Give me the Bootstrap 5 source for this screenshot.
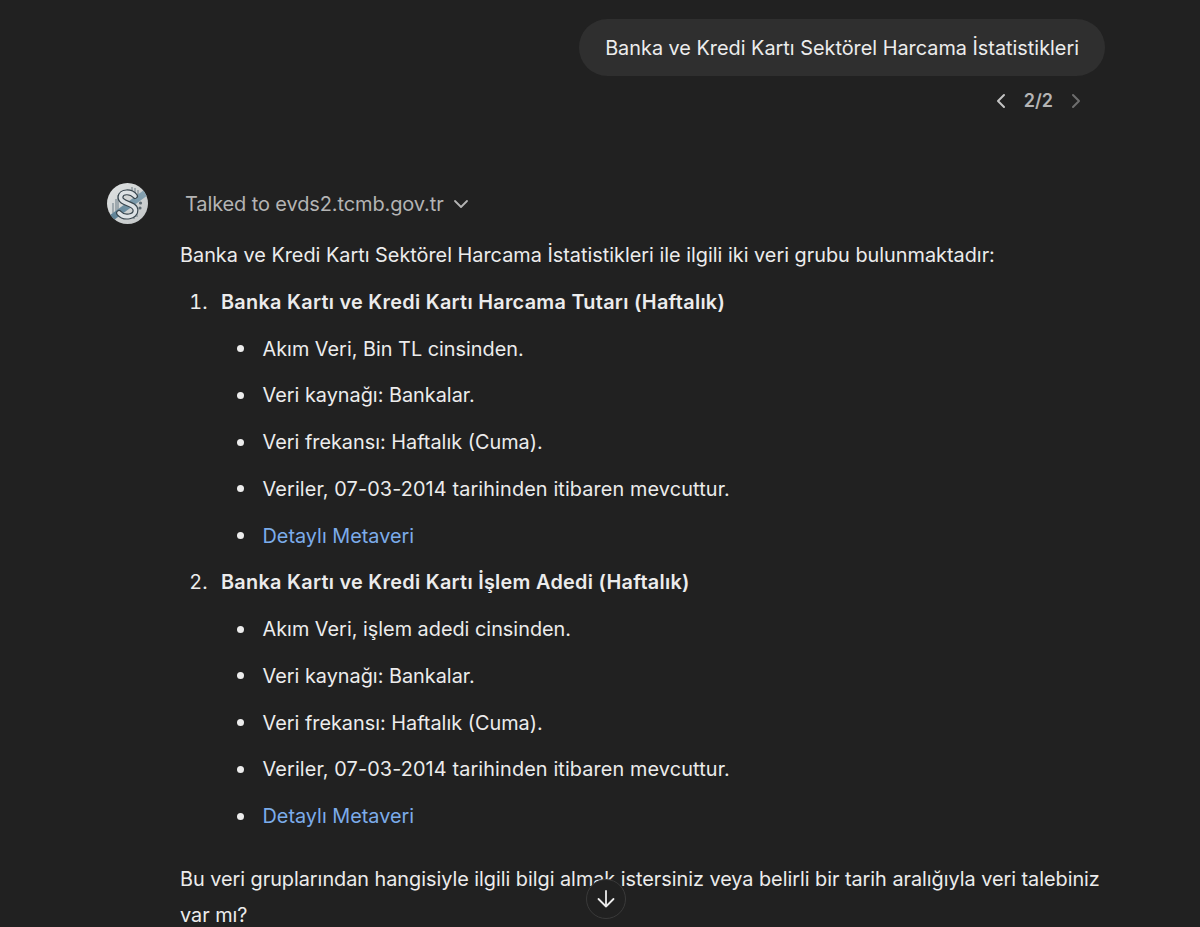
<!DOCTYPE html>
<html lang="tr">
<head>
<meta charset="utf-8">
<title>Sohbet</title>
<link href="https://cdn.jsdelivr.net/npm/bootstrap@5.3.0/dist/css/bootstrap.min.css" rel="stylesheet">
<style>
html,body{height:100%;}
body{background:#212121;color:#ececec;font-family:Inter,"Liberation Sans",sans-serif;font-size:19.85px;line-height:36px;overflow:hidden;-webkit-font-smoothing:antialiased;}
.page-wrap{height:927px;padding:19px 95px 0 107px;position:relative;overflow:hidden;}
.user-bubble{background:#2f2f2f;border-radius:29px;height:57px;padding:0 26px;color:#ececec;}
.pager{height:50px;color:#b4b4b4;font-size:18px;font-weight:600;margin-right:23px;gap:17px;}
.msg-row{margin-top:57px;gap:32px;}
.avatar{width:41px;height:41px;flex:none;}
.talked{color:#b4b4b4;padding-left:5px;height:42px;gap:9px;margin-bottom:12px;font-size:20px;letter-spacing:-.12px;}
.answer{flex:1;min-width:0;}
.answer p{margin:0 0 10.75px;}
.answer ol{margin:0;padding-left:41px;}
.answer ul{margin:0;padding-left:41.5px;list-style:none;}
.answer li{margin:0;}
.answer ol>li::marker{content:counter(list-item) ".\2002\2009";}
.answer ul>li{margin-bottom:10.75px;position:relative;}
.answer ul>li::before{content:"";position:absolute;left:-25.5px;top:14.5px;width:7px;height:7px;border-radius:50%;background:#ececec;}
.answer b{font-weight:600;letter-spacing:.28px;}
.answer a{color:#7cacea;text-decoration:none;}
.answer .closing{margin-top:27px;letter-spacing:-.03px;}
.date-line{letter-spacing:.12px;}
.to-bottom{position:absolute;left:586px;top:879px;width:40px;height:40px;border-radius:50%;border:1px solid #3a3a3a;background:#212121;padding:0;}
</style>
</head>
<body>
<div class="page-wrap">
  <div class="d-flex justify-content-end">
    <div class="user-bubble d-flex align-items-center text-nowrap">Banka ve Kredi Kartı Sektörel Harcama İstatistikleri</div>
  </div>
  <div class="pager d-flex justify-content-end align-items-center">
    <svg width="12" height="16" viewBox="0 0 12 16" fill="none" stroke="#c4c4c4" stroke-width="2" stroke-linecap="round" stroke-linejoin="round"><path d="M9 2 3 8l6 6"/></svg>
    <span>2/2</span>
    <svg width="12" height="16" viewBox="0 0 12 16" fill="none" stroke="#6e6e6e" stroke-width="2" stroke-linecap="round" stroke-linejoin="round"><path d="m3 2 6 6-6 6"/></svg>
  </div>
  <div class="msg-row d-flex">
    <svg class="avatar" viewBox="0 0 41 41" role="img" aria-label="logo">
      <defs>
        <linearGradient id="bg" x1="0" y1="0" x2="1" y2="1"><stop offset="0" stop-color="#dfe2e2"/><stop offset="1" stop-color="#c2c6c7"/></linearGradient>
        <linearGradient id="bar" x1="0" y1="1" x2="1" y2="0"><stop offset="0" stop-color="#5b7f94"/><stop offset="1" stop-color="#8aa6b5"/></linearGradient>
        <clipPath id="cc"><circle cx="20.5" cy="20.5" r="20.5"/></clipPath>
      </defs>
      <g clip-path="url(#cc)">
        <rect width="41" height="41" fill="url(#bg)"/>
        <path d="M6 30V20M9 31V16M11 33V12M25 4v9M28 5v8M31 7v7M30 29v5M27 30v6" stroke="#75838c" stroke-width="1.1" fill="none"/>
        <path d="M3 36 41 8" stroke="url(#bar)" stroke-width="6.5"/>
        <path d="M28 13C24 8 14 8 13.5 14 13 21 28 20 28.5 27 29 34 17 36 12 30" fill="none" stroke="#3a474f" stroke-width="6" stroke-linecap="round"/>
        <path d="M28 13C24 8 14 8 13.5 14 13 21 28 20 28.5 27 29 34 17 36 12 30" fill="none" stroke="#dde2e5" stroke-width="3.6" stroke-linecap="round"/>
        <circle cx="33.5" cy="20" r="1.6" fill="#5f6c74"/><circle cx="33" cy="25" r="1.6" fill="#5f6c74"/>
      </g>
    </svg>
    <div class="answer">
      <div class="talked d-flex align-items-center">
        <span>Talked to evds2.tcmb.gov.tr</span>
        <svg width="16" height="10" viewBox="0 0 16 10" fill="none" stroke="#b4b4b4" stroke-width="1.8" stroke-linecap="round" stroke-linejoin="round"><path d="m2 2 6 6 6-6"/></svg>
      </div>
      <p>Banka ve Kredi Kartı Sektörel Harcama İstatistikleri ile ilgili iki veri grubu bulunmaktadır:</p>
      <ol>
        <li>
          <p><b>Banka Kartı ve Kredi Kartı Harcama Tutarı (Haftalık)</b></p>
          <ul>
            <li>Akım Veri, Bin TL cinsinden.</li>
            <li>Veri kaynağı: Bankalar.</li>
            <li>Veri frekansı: Haftalık (Cuma).</li>
            <li class="date-line">Veriler, 07-03-2014 tarihinden itibaren mevcuttur.</li>
            <li><a href="#">Detaylı Metaveri</a></li>
          </ul>
        </li>
        <li>
          <p><b>Banka Kartı ve Kredi Kartı İşlem Adedi (Haftalık)</b></p>
          <ul>
            <li>Akım Veri, işlem adedi cinsinden.</li>
            <li>Veri kaynağı: Bankalar.</li>
            <li>Veri frekansı: Haftalık (Cuma).</li>
            <li class="date-line">Veriler, 07-03-2014 tarihinden itibaren mevcuttur.</li>
            <li><a href="#">Detaylı Metaveri</a></li>
          </ul>
        </li>
      </ol>
      <p class="closing">Bu veri gruplarından hangisiyle ilgili bilgi almak istersiniz veya belirli bir tarih aralığıyla veri talebiniz var mı?</p>
    </div>
  </div>
  <button class="to-bottom d-flex align-items-center justify-content-center" type="button" aria-label="Aşağı kaydır">
    <svg width="20" height="20" viewBox="0 0 20 20" fill="none" stroke="#ececec" stroke-width="1.8" stroke-linecap="round" stroke-linejoin="round"><path d="M10 2v15.5M2.5 10l7.5 7.5 7.5-7.5"/></svg>
  </button>
</div>
<script src="https://cdn.jsdelivr.net/npm/bootstrap@5.3.0/dist/js/bootstrap.bundle.min.js"></script>
</body>
</html>
